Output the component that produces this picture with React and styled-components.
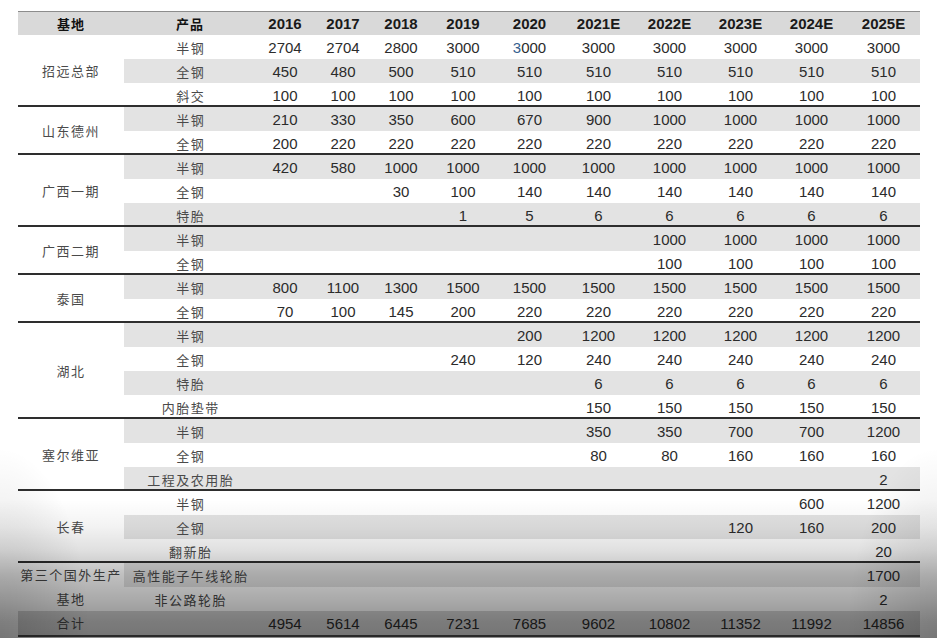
import React from 'react';
import styled, { createGlobalStyle } from 'styled-components';

const GlobalStyle = createGlobalStyle`
  html, body {
    margin: 0;
    padding: 0;
    background: #ffffff;
  }
  body {
    font-family: 'Liberation Sans', Arial, sans-serif;
  }
`;

const YEAR_COLS = '58px 58px 58px 66px 67px 71px 71px 71px 71px 73px';
const BASE_W = 106;
const PRODUCT_W = 132;

const Page = styled.div`
  position: relative;
  width: 937px;
  height: 638px;
  overflow: hidden;
  padding: 11px 0 0 18px;
  box-sizing: border-box;
`;

const Table = styled.div`
  width: 902px;
  display: flex;
  flex-direction: column;
  border-top: 1px solid #8c8c8c;
  border-bottom: 2px solid #4a4a4a;
`;

const HeaderRow = styled.div`
  display: grid;
  grid-template-columns: ${BASE_W}px ${PRODUCT_W}px ${YEAR_COLS};
  height: 23px;
  align-items: center;
  background: #d9d9d9;
`;

const HeadCn = styled.div`
  text-align: center;
  font-family: 'Noto Sans CJK SC', sans-serif;
  font-weight: 700;
  font-size: 13px;
  letter-spacing: 1px;
  color: #111;
`;

const HeadYear = styled.div`
  text-align: center;
  font-family: 'Liberation Sans', Arial, sans-serif;
  font-weight: 700;
  font-size: 15px;
  color: #1a1a1a;
`;

// group divider overlaps the previous row so the 24px rhythm is kept
const Group = styled.div`
  display: flex;
  border-top: ${({ $divider }) => ($divider ? '2px solid #2e2e2e' : 'none')};
  margin-top: ${({ $divider }) => ($divider ? '-2px' : '0')};
  position: relative;
`;

const BaseCell = styled.div`
  width: ${BASE_W}px;
  flex-shrink: 0;
  display: flex;
  align-items: center;
  justify-content: center;
  text-align: center;
  background: ${({ $shade }) => ($shade ? '#d4d4d4' : 'transparent')};
  font-family: 'Noto Sans CJK SC', sans-serif;
  font-size: 13px;
  line-height: 24px;
  letter-spacing: 1.5px;
  color: #4a4a4a;
`;

const Rows = styled.div`
  flex: 1;
  display: flex;
  flex-direction: column;
`;

const Row = styled.div`
  display: grid;
  grid-template-columns: ${PRODUCT_W}px ${YEAR_COLS};
  height: 24px;
  align-items: center;
  background: ${({ $shade, $total }) => ($total ? '#d4d4d4' : $shade ? '#e3e3e3' : 'transparent')};
`;

const Product = styled.div`
  text-align: center;
  font-family: 'Noto Sans CJK SC', sans-serif;
  font-size: 13px;
  letter-spacing: 1.5px;
  padding-left: 1.5px;
  color: #4a4a4a;
  white-space: nowrap;
`;

const Num = styled.div`
  text-align: center;
  font-family: 'Liberation Sans', Arial, sans-serif;
  font-size: 15px;
  color: #2b2b2b;
`;

const Caret = styled.span`
  color: #355f8f;
`;

const Shadow = styled.div`
  position: absolute;
  inset: 0;
  pointer-events: none;
  background:
    radial-gradient(ellipse 90px 190px at 0 100%, rgba(0, 0, 0, 0.16), rgba(0, 0, 0, 0)),
    radial-gradient(ellipse 90px 190px at 100% 100%, rgba(0, 0, 0, 0.16), rgba(0, 0, 0, 0)),
    linear-gradient(
      to bottom,
      rgba(0, 0, 0, 0) 500px,
      rgba(0, 0, 0, 0.05) 527px,
      rgba(0, 0, 0, 0.12) 550px,
      rgba(0, 0, 0, 0.25) 575px,
      rgba(0, 0, 0, 0.33) 598px,
      rgba(0, 0, 0, 0.42) 622px,
      rgba(0, 0, 0, 0.45) 638px
    );
`;

const YEARS = ['2016', '2017', '2018', '2019', '2020', '2021E', '2022E', '2023E', '2024E', '2025E'];

const e = (n) => Array(n).fill('');
const same = (v) => Array(10).fill(v);

const groups = [
  {
    base: '招远总部',
    rows: [
      ['半钢', [2704, 2704, 2800, 3000, 'caret', 3000, 3000, 3000, 3000, 3000], false],
      ['全钢', [450, 480, 500, 510, 510, 510, 510, 510, 510, 510], true],
      ['斜交', same(100), false],
    ],
  },
  {
    base: '山东德州',
    rows: [
      ['半钢', [210, 330, 350, 600, 670, 900, 1000, 1000, 1000, 1000], true],
      ['全钢', same(220).map((v, i) => (i === 0 ? 200 : v)), false],
    ],
  },
  {
    base: '广西一期',
    rows: [
      ['半钢', [420, 580, 1000, 1000, 1000, 1000, 1000, 1000, 1000, 1000], true],
      ['全钢', [...e(2), 30, 100, 140, 140, 140, 140, 140, 140], false],
      ['特胎', [...e(3), 1, 5, 6, 6, 6, 6, 6], true],
    ],
  },
  {
    base: '广西二期',
    rows: [
      ['半钢', [...e(6), 1000, 1000, 1000, 1000], true],
      ['全钢', [...e(6), 100, 100, 100, 100], false],
    ],
  },
  {
    base: '泰国',
    rows: [
      ['半钢', [800, 1100, 1300, 1500, 1500, 1500, 1500, 1500, 1500, 1500], true],
      ['全钢', [70, 100, 145, 200, 220, 220, 220, 220, 220, 220], false],
    ],
  },
  {
    base: '湖北',
    rows: [
      ['半钢', [...e(4), 200, 1200, 1200, 1200, 1200, 1200], true],
      ['全钢', [...e(3), 240, 120, 240, 240, 240, 240, 240], false],
      ['特胎', [...e(5), 6, 6, 6, 6, 6], true],
      ['内胎垫带', [...e(5), 150, 150, 150, 150, 150], false],
    ],
  },
  {
    base: '塞尔维亚',
    rows: [
      ['半钢', [...e(5), 350, 350, 700, 700, 1200], true],
      ['全钢', [...e(5), 80, 80, 160, 160, 160], false],
      ['工程及农用胎', [...e(9), 2], true],
    ],
  },
  {
    base: '长春',
    rows: [
      ['半钢', [...e(8), 600, 1200], false],
      ['全钢', [...e(7), 120, 160, 200], true],
      ['翻新胎', [...e(9), 20], false],
    ],
  },
  {
    base: '第三个国外生产基地',
    rows: [
      ['高性能子午线轮胎', [...e(9), 1700], true],
      ['非公路轮胎', [...e(9), 2], false],
    ],
  },
  {
    base: '合计',
    total: true,
    rows: [['', [4954, 5614, 6445, 7231, 7685, 9602, 10802, 11352, 11992, 14856], true]],
  },
];

const renderValue = (v) =>
  v === 'caret' ? (
    <>
      <Caret>3</Caret>000
    </>
  ) : (
    v
  );

export default function App() {
  return (
    <>
      <GlobalStyle />
      <Page>
        <Table>
          <HeaderRow>
            <HeadCn>基地</HeadCn>
            <HeadCn>产品</HeadCn>
            {YEARS.map((y) => (
              <HeadYear key={y}>{y}</HeadYear>
            ))}
          </HeaderRow>

          {groups.map((g, gi) => (
            <Group key={g.base} $divider={gi > 0 && !g.total}>
              <BaseCell $shade={g.total}>{g.base}</BaseCell>
              <Rows>
                {g.rows.map(([name, values, shade], ri) => (
                  <Row key={ri} $shade={shade} $total={g.total}>
                    <Product>{name}</Product>
                    {values.map((v, vi) => (
                      <Num key={vi}>{renderValue(v)}</Num>
                    ))}
                  </Row>
                ))}
              </Rows>
            </Group>
          ))}
        </Table>
        <Shadow />
      </Page>
    </>
  );
}
